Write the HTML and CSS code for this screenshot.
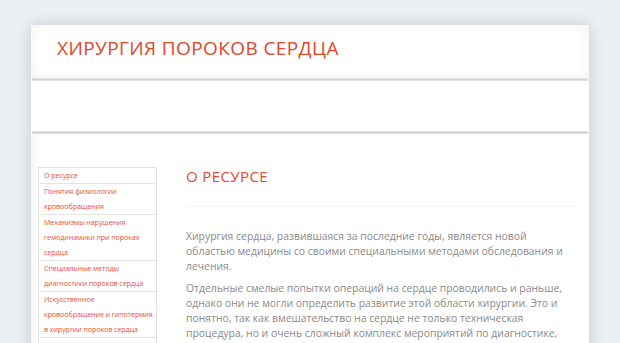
FILE: index.html
```html
<!DOCTYPE html>
<html lang="ru">
<head>
    <meta charset="UTF-8">
    <meta name="viewport" content="width=device-width, initial-scale=1.0">
    <title>Хирургия пороков сердца</title>
    <link rel="stylesheet" href="styles.css">
</head>
<body>

<div class="page">
    <div class="header">
        <h1 class="site-title">ХИРУРГИЯ ПОРОКОВ СЕРДЦА</h1>
    </div>
    <div class="divider"></div>
    <div class="banner"></div>
    <div class="divider"></div>

    <div class="main">
        <!-- Меню разделов -->
        <ul class="menu">
            <li><a href="#">О ресурсе</a></li>
            <li><a href="#">Понятия физиологии кровообращения</a></li>
            <li><a href="#">Механизмы нарушения гемодинамики при пороках сердца</a></li>
            <li><a href="#">Специальные методы диагностики пороков сердца</a></li>
            <li><a href="#">Искусственное кровообращение и гипотермия в хирургии пороков сердца</a></li>
            <li><a href="#">Некоторые хирургические вмешательства на сердце</a></li>
        </ul>

        <div class="content">
            <h2 class="content-title">О РЕСУРСЕ</h2>
            <p>Хирургия сердца, развившаяся за последние годы, является новой областью медицины со своими специальными методами обследования и лечения.</p>
            <p>Отдельные смелые попытки операций на сердце проводились и раньше, однако они не могли определить развитие этой области хирургии. Это и понятно, так как вмешательство на сердце не только техническая процедура, но и очень сложный комплекс мероприятий по диагностике, обезболиванию и послеоперационному ведению больных.</p>
        </div>
    </div>
</div>

</body>
</html>
```

FILE: styles.css
```css
body {
    margin: 0;
    padding: 0;
    background-color: #edf0f3;
    font-family: 'Open Sans', sans-serif;
}
.page {
    width: 558px;
    margin: 25px auto 0;
    background-color: #fff;
    box-shadow: 0 0 14px rgba(90, 100, 115, 0.28);
}
.header {
    height: 53px;
    padding: 11px 0 0 26px;
    box-sizing: border-box;
    box-shadow: inset 0 0 14px rgba(0, 0, 0, 0.06);
}
.site-title {
    margin: 0;
    font-size: 19px;
    font-weight: normal;
    letter-spacing: 0.4px;
    line-height: 25px;
    color: #e2462b;
}
.divider {
    height: 3px;
    margin: 0 1px;
    background: linear-gradient(#ebebeb, #cdcdcd 60%, #e8e8e8);
}
.banner {
    height: 50px;
}
.main {
    display: flex;
    align-items: flex-start;
    gap: 29px;
    padding: 33px 13px 40px 7px;
    box-shadow: inset 12px 0 14px -10px rgba(0, 0, 0, 0.06);
}
.menu {
    list-style-type: none;
    margin: 0;
    padding: 0;
    width: 117px;
    flex-shrink: 0;
    border: 1px solid #e3e3e3;
}
.menu li {
    border-bottom: 1px solid #e3e3e3;
    padding: 0 0 0 5px;
    font-size: 7.2px;
    letter-spacing: -0.12px;
    line-height: 15px;
}
.menu li:last-child {
    border-bottom: none;
}
.menu a {
    color: #e8523a;
    text-decoration: none;
}
.content {
    flex: 1;
}
.content-title {
    margin: 0;
    padding-bottom: 20px;
    border-bottom: 1px solid #f1f1f1;
    font-size: 15px;
    font-weight: normal;
    letter-spacing: 0.4px;
    line-height: 19px;
    color: #e8472f;
}
.content p {
    margin: 22px 0 0;
    font-size: 10.4px;
    line-height: 15px;
    color: #8a8a8a;
}
.content p + p {
    margin-top: 7px;
}
```
